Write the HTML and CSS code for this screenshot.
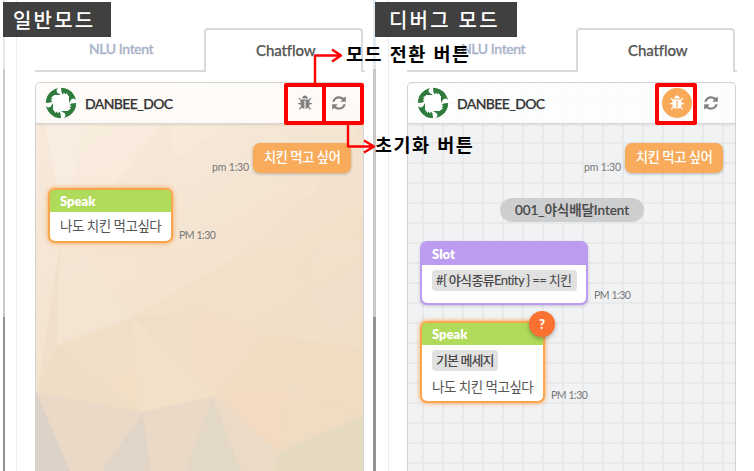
FILE: index.html
```
<!DOCTYPE html>
<html lang="ko">
<head>
<meta charset="utf-8">
<title>DANBEE Chatflow</title>
<link rel="stylesheet" href="styles.css">
</head>
<body>
<svg class="defs" aria-hidden="true">
  <symbol id="bug" viewBox="0 0 1792 1792"><path d="M1696 960q0 26-19 45t-45 19h-224q0 171-67 290l208 209q19 19 19 45t-19 45q-18 19-45 19t-45-19l-198-197q-5 5-15 13t-42 28.500-65 36.500-82 29-97 13v-896h-128v896q-51 0-101.500-13.500t-87-33-66-39-43.500-32.500l-15-14-183 207q-20 21-48 21-24 0-43-16-19-18-20.500-44.500t15.500-46.500l202-227q-58-114-58-274h-224q-26 0-45-19t-19-45 19-45 45-19h224v-294l-173-173q-19-19-19-45t19-45 45-19 45 19l173 173h844l173-173q19-19 45-19t45 19 19 45-19 45l-173 173v294h224q26 0 45 19t19 45zm-480-576h-640q0-133 93.500-226.500t226.500-93.500 226.500 93.500 93.500 226.500z"/></symbol>
  <symbol id="refresh" viewBox="0 0 1792 1792"><path d="M1639 1056q0 5-1 7-64 268-268 434.500t-478 166.500q-146 0-282.500-55t-243.500-157l-129 129q-19 19-45 19t-45-19-19-45v-448q0-26 19-45t45-19h448q26 0 45 19t19 45-19 45l-137 137q71 66 161 102t187 36q134 0 250-65t186-179q11-17 53-117 8-23 30-23h192q13 0 22.500 9.500t9.500 22.500zm25-800v448q0 26-19 45t-45 19h-448q-26 0-45-19t-19-45 19-45l138-138q-148-137-349-137-134 0-250 65t-186 179q-11 17-53 117-8 23-30 23h-199q-13 0-22.500-9.500t-9.500-22.500v-7q65-268 270-434.500t480-166.500q146 0 284 55.500t245 156.500l130-129q19-19 45-19t45 19 19 45z"/></symbol>
  <symbol id="logo" viewBox="0 0 32 32">
    <circle cx="16" cy="16" r="15.500" fill="#fff"/>
    <g fill="#2f7a3d">
      <path id="leaf" d="M16 .8A15.200 15.200 0 0 1 28.600 7.500L23.500 9 21.500 6 20.500 7.500 19 5.500 18 7.500 16.500 5.500ZM28.600 7.500A15.200 15.200 0 0 1 31 13L29 11.500 26.500 12 24 16 24 8Z"/>
      <use href="#leaf" transform="rotate(90 16 16)"/>
      <use href="#leaf" transform="rotate(180 16 16)"/>
      <use href="#leaf" transform="rotate(270 16 16)"/>
    </g>
  </symbol>
</svg>

<main class="board">
  <section class="screen">
    <h2 class="mode mode-normal">일반모드</h2>
    <div class="inner">
      <nav class="tabs"><span class="tab nlu">NLU Intent</span><span class="tab active">Chatflow</span><i class="tail"></i></nav>
      <div class="chat">
        <svg class="backdrop" viewBox="36 83 327 388" preserveAspectRatio="none">
          <defs><linearGradient id="base" x1="0" y1="0" x2=".5" y2="1"><stop offset="0" stop-color="#f8ebdc"/><stop offset=".4" stop-color="#f5e6d5"/><stop offset="1" stop-color="#f0dcc2"/></linearGradient></defs>
          <path fill="url(#base)" d="M36 83h327v388H36z"/>
          <g opacity=".5">
            <path fill="#fbf2e8" d="M45 124 84 124 72 190 57 188Z"/>
            <path fill="#faefe2" d="M84 124h78l-48 62-42 4Z"/>
            <path fill="#faeee0" d="M170 124h60l-55 34Z"/>
            <path fill="#f1dfca" d="M363 124v110l-120 20 70-62Z"/>
          </g>
          <g opacity=".8">
            <path fill="#f5e6d4" d="M60 245 80 249 132 317 57 343Z"/>
            <path fill="#f1dfca" d="M60 245 57 345 37 392Z"/>
            <path fill="#f5e4d1" d="M80 249 145 248 132 317Z"/>
            <path fill="#f5e5cf" d="M145 248 236 257 182 291 132 317Z"/>
            <path fill="#f2e0c9" d="M236 257 363 234V348L260 334 198 310 132 317Z"/>
            <path fill="#f1e0cf" d="M321 240h42v78l-28 32-33-76Z" opacity=".5"/>
            <path fill="#f2dfc6" d="M57 345 132 318 143 412 37 392Z"/>
            <path fill="#efdec4" d="M57 345 143 412 37 392Z"/>
            <path fill="#f3e2ca" d="M132 318 213 396 143 412Z"/>
            <path fill="#f1dec6" d="M132 318 198 310 213 396Z"/>
            <path fill="#f6dec8" d="M198 310 262 334 213 396 194 373Z"/>
            <path fill="#f1ddc4" d="M262 334 363 348V416L290 384 213 396Z"/>
            <path fill="#f4dbc3" d="M213 396 290 384 279 452Z"/>
            <path fill="#efdcc4" d="M290 384 363 416 279 452Z"/>
          </g>
          <path fill="#e9d9c6" d="M36 392 143 412 102 471H36Z"/>
          <path fill="#dcd2c8" d="M36 392 70 471H36Z"/>
          <path fill="#e0d5c7" d="M143 412 151 471H102Z"/>
          <path fill="#ead9c6" d="M143 412 213 396 185 471H151Z"/>
          <path fill="#e3d7c5" d="M213 396 241 471H185Z"/>
          <path fill="#ebdac5" d="M213 396 279 452 275 471H241Z"/>
          <path fill="#e5d9c0" d="M279 452 363 416V471H275Z"/>
        </svg>
        <header class="bar"><svg class="logo"><use href="#logo"/></svg><b class="name">DANBEE_DOC</b><span class="btn"><svg><use href="#bug"/></svg></span><span class="btn"><svg><use href="#refresh"/></svg></span></header>
        <div class="talk">
          <div class="row mine"><time class="am">pm 1:30</time><p class="bubble">치킨 먹고 싶어</p></div>
          <div class="row first"><article class="card speak"><h3>Speak</h3><p class="line">나도 치킨 먹고싶다</p></article><time>PM 1:30</time></div>
        </div>
      </div>
    </div>
  </section>

  <section class="screen">
    <h2 class="mode mode-debug">디버그 모드</h2>
    <div class="inner">
      <nav class="tabs"><span class="tab nlu">NLU Intent</span><span class="tab active">Chatflow</span><i class="tail"></i></nav>
      <div class="chat squares">
        <header class="bar"><svg class="logo"><use href="#logo"/></svg><b class="name">DANBEE_DOC</b><span class="btn on"><svg><use href="#bug"/></svg></span><span class="btn"><svg><use href="#refresh"/></svg></span></header>
        <div class="talk">
          <div class="row mine"><time class="am">pm 1:30</time><p class="bubble">치킨 먹고 싶어</p></div>
          <p class="pill">001_야식배달Intent</p>
          <div class="row"><article class="card slot"><h3>Slot</h3><p class="tag slot-tag"><b>#{ 야식종류Entity }</b> == 치킨</p></article><time class="slot-time">PM 1:30</time></div>
          <div class="row second"><article class="card speak debug"><h3>Speak</h3><p class="tag msg-tag"><b>기본 메세지</b></p><p class="line">나도 치킨 먹고싶다</p><span class="help">?</span></article><time>PM 1:30</time></div>
        </div>
      </div>
    </div>
  </section>
</main>

<svg class="marks" viewBox="0 0 754 471">
  <g fill="none" stroke="#f00" stroke-linejoin="round">
    <path stroke-width="4" d="M286 85h76v38h-76zM324 85v38M657 85h38v38h-38z"/>
    <path stroke-width="2.400" d="M315 84V55.500H341M332 49.500 341 55.500 332 61.500M348 124V146.500H374M364 140.500 374 146.500 364 152.500"/>
  </g>
</svg>
<p class="note note-mode">모드 전환 버튼</p>
<p class="note note-reset">초기화 버튼</p>
</body>
</html>
```
FILE: styles.css
```
* { box-sizing: border-box; }
body { margin: 0; width: 754px; height: 471px; overflow: hidden; position: relative; background: #fff; color: #484848; font-family: Lato, "Noto Sans CJK KR", sans-serif; }
h2, h3, p { margin: 0; }
.defs { position: absolute; width: 0; height: 0; }
.board { display: flex; height: 471px; padding-left: 3px; }
.screen { position: relative; width: 372px; flex: none; padding-left: 11px; border-left: 2px solid; border-image: linear-gradient(#e3eaef 0 70px, #c9c9c9 70px 317px, #929292 317px) 1; }
.screen + .screen { margin-left: -2px; width: 374px; padding-left: 12px; border-left-width: 3px; }
.inner { height: 471px; padding: 28px 0 0 18px; border-left: 1px solid #ededed; display: flex; flex-direction: column; }
.mode { position: absolute; left: -2px; top: 2px; height: 35px; background: #404040; color: #fff; font: 500 20px/35px "Noto Sans CJK KR", sans-serif; white-space: nowrap; }
.mode-normal { width: 108px; padding-left: 10px; letter-spacing: 2.2px; }
.mode-debug { left: -1px; width: 142px; padding-left: 14px; letter-spacing: 2.2px; }
.tabs { display: flex; width: 331px; height: 44px; }
.tab { display: block; flex: none; white-space: nowrap; font-size: 14px; font-weight: 500; }
.nlu { width: 169px; border-bottom: 2px solid #d6dadd; padding: 12px 0 0 54px; color: #a9b4cb; line-height: 17px; letter-spacing: -.4px; -webkit-text-stroke: .35px #a9b4cb; }
.active { width: 159px; border: 2px solid #d6dadd; border-bottom: 0; border-radius: 4px 4px 0 0; padding: 11px 0 0 50px; color: #555; line-height: 19px; font-size: 15px; letter-spacing: -.1px; -webkit-text-stroke: .25px #555; }
.tail { width: 2px; align-self: flex-end; height: 2px; background: #d6dadd; }
.chat { position: relative; width: 329px; height: 389px; margin-top: 10px; border: 1px solid #d2d2d2; border-width: 1px 1px 0; border-radius: 5px 5px 0 0; overflow: hidden; }
.squares { background: repeating-linear-gradient(90deg, transparent 0 14px, #e8e9eb 14px 16px, transparent 16px 20px), repeating-linear-gradient(#e8e9eb 0 1px, transparent 1px 19px, #e8e9eb 19px 20px) #f1f2f4; }
.backdrop { position: absolute; inset: 0; width: 100%; height: 100%; }
.bar { position: relative; display: flex; align-items: center; height: 41px; padding-left: 9px; background: rgba(255,255,255,.8); border-bottom: 1px solid #d9d5d1; box-shadow: 0 1px 2px rgba(0,0,0,.1); }
.logo { width: 32px; height: 32px; flex: none; }
.name { width: 205px; flex: none; margin-left: 8px; font-size: 14px; letter-spacing: -.6px; font-weight: 500; color: #333; -webkit-text-stroke: .25px #333; }
.btn { display: flex; flex: none; align-items: center; justify-content: center; width: 30px; height: 30px; border-radius: 50%; margin-right: 4px; }
.btn svg { width: 16px; height: 16px; fill: #828282; }
.btn.on { background: #f8aa58; }
.btn.on svg { fill: #fff; }
.talk { position: relative; padding: 19px 12px 0 12px; }
.row { display: flex; align-items: flex-end; }
.mine { justify-content: flex-end; height: 30px; }
.bubble { width: 98px; height: 30px; border-radius: 7px; text-align: center; background: #f8ab5a; color: #fff; font-size: 13.500px; font-weight: 500; line-height: 29px; letter-spacing: -.6px; box-shadow: 0 1px 3px rgba(0,0,0,.25); white-space: nowrap; }
time { font-size: 10.500px; line-height: 14px; margin: 0 0 1px 6px; letter-spacing: -.45px; color: #777; white-space: nowrap; }
.am { margin: 0 4px -1px 0; letter-spacing: -.15px; }
.first { margin-top: 15px; }
.card { position: relative; border: 2px solid; border-radius: 7px; background: #fff; }
.card h3 { height: 22px; padding-left: 10px; color: #fff; font-size: 13px; line-height: 22px; font-weight: 800; border-radius: 4px 4px 0 0; }
.speak { width: 125px; height: 55px; border-color: #faa64f; box-shadow: 0 0 5px #f8a34e; }
.speak h3 { background: #b0da59; }
.line { padding-left: 10px; font-size: 13.500px; line-height: 29px; letter-spacing: -.5px; color: #555; white-space: nowrap; }
.pill { width: 144px; height: 24px; margin: 25px 0 19px 80px; border-radius: 12px; background: #cdcecf; text-align: center; font-size: 13.500px; font-weight: 500; line-height: 24px; letter-spacing: -.05px; white-space: nowrap; -webkit-text-stroke: .2px #484848; }
.slot { width: 168px; height: 64px; border-color: #bb9cf0; box-shadow: 0 1px 3px rgba(70,40,110,.25); }
.slot h3 { background: #bb9cf0; }
.tag { height: 21px; margin: 5px 0 0 10px; padding-left: 4px; border-radius: 4px; background: #e1e1e1; font-size: 13px; line-height: 21px; letter-spacing: -.65px; white-space: nowrap; }
.tag b { font-weight: 500; }
.slot-tag { width: 145px; }
.msg-tag { width: 66px; letter-spacing: -.9px; }
.slot-time { margin-bottom: 3px; }
.second { margin-top: 16px; }
.debug { height: 82px; }
.debug .line { line-height: 32px; }
.help { position: absolute; right: -12px; top: -12px; width: 26px; height: 26px; border-radius: 50%; background: #fb7132; color: #fff; text-align: center; font: 900 13px/26px Lato, sans-serif; box-shadow: 0 2px 4px rgba(0,0,0,.3); }
.marks { position: absolute; inset: 0; width: 754px; height: 471px; }
.note { position: absolute; color: #000; font: 700 18.500px/24px "Noto Sans CJK KR", sans-serif; white-space: nowrap; }
.note-mode { left: 346px; top: 41px; letter-spacing: 1.500px; }
.note-reset { left: 375px; top: 132px; letter-spacing: 1.500px; }
```
